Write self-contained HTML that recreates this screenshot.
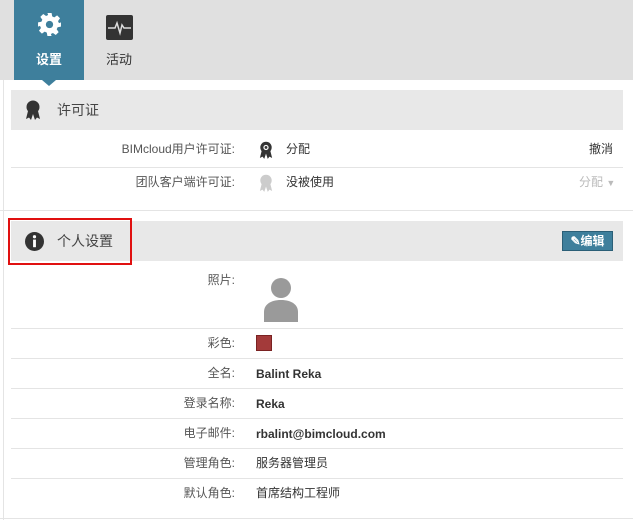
<!DOCTYPE html>
<html><head><meta charset="utf-8"><style>
*{margin:0;padding:0;box-sizing:border-box}
body{width:633px;height:526px;background:#fff;font-family:"Liberation Sans","Noto Sans CJK SC",sans-serif;font-size:12px;line-height:16px;color:#333;position:relative;overflow:hidden}
.abs{position:absolute}
.top{left:0;top:0;width:633px;height:80px;background:#e0e0e0}
.tab{top:0;height:80px;text-align:center;font-size:13px}
.hdr{left:11px;width:612px;height:40px;background:#e8e8e8;font-size:14px;color:#444}
.line{height:1px;background:#e4e4e4}
.lbl{width:235px;text-align:right;color:#555}
.val{left:256px;color:#333}
b{font-weight:bold;color:#333}
</style></head><body>
<div class="abs top"></div>
<div class="abs tab" style="left:14px;width:70px;background:#3e7f9c;color:#fff;font-weight:bold">
<svg class="abs" style="left:23px;top:12px" width="25" height="25" viewBox="0 0 24 24"><path fill="#fff" d="M10 1h4l.6 3.2 2 .9 2.7-1.9 2.8 2.8-1.9 2.7.9 2L23 10v4l-3.2.6-.9 2 1.9 2.7-2.8 2.8-2.7-1.9-2 .9L14 23h-4l-.6-3.2-2-.9-2.7 1.9-2.8-2.8 1.9-2.7-.9-2L1 14v-4l3.2-.6.9-2L3.2 4.7 6 1.9l2.7 1.9 2-.9z"/><circle cx="12" cy="12" r="3.5" fill="#3e7f9c"/></svg>
<div class="abs" style="left:0;width:70px;top:52px">设置</div></div>
<div class="abs" style="left:42px;top:80px;border-left:7px solid transparent;border-right:7px solid transparent;border-top:6px solid #3e7f9c"></div>
<div class="abs tab" style="left:84px;width:70px;color:#333">
<svg class="abs" style="left:22px;top:15px" width="27" height="25" viewBox="0 0 27 25"><rect width="27" height="25" rx="2" fill="#333"/><path d="M2 13h7l2-5 3 10 2-8 2 3h7" stroke="#ddd" stroke-width="1.5" fill="none"/></svg>
<div class="abs" style="left:0;width:70px;top:52px">活动</div></div>
<div class="abs" style="left:3px;top:80px;width:1px;height:440px;background:#e4e4e4"></div>

<div class="abs hdr" style="top:90px">
<svg class="abs" style="left:14px;top:10px" width="16" height="21" viewBox="0 0 16 21"><circle cx="8" cy="7" r="6.5" fill="#333"/><path d="M3 11l-2 8 3-1.5 2 2.5 2-6 2 6 2-2.5 3 1.5-2-8z" fill="#333"/></svg>
<div class="abs" style="left:46px;top:12px">许可证</div></div>
<div class="abs lbl" style="top:141px">BIMcloud用户许可证:</div>
<svg class="abs" style="left:259px;top:141px" width="14" height="19" viewBox="0 0 16 21"><circle cx="8" cy="7" r="6.5" fill="#333"/><circle cx="8" cy="7" r="3" fill="#fff"/><circle cx="8" cy="7" r="1.6" fill="#333"/><path d="M3 11l-2 8 3-1.5 2 2.5 2-6 2 6 2-2.5 3 1.5-2-8z" fill="#333"/></svg>
<div class="abs" style="left:286px;top:141px">分配</div>
<div class="abs" style="left:589px;top:141px">撤消</div>
<div class="abs line" style="left:11px;top:167px;width:612px"></div>
<div class="abs lbl" style="top:174px">团队客户端许可证:</div>
<svg class="abs" style="left:259px;top:174px" width="14" height="19" viewBox="0 0 16 21"><circle cx="8" cy="7" r="6.5" fill="#ccc"/><path d="M3 11l-2 8 3-1.5 2 2.5 2-6 2 6 2-2.5 3 1.5-2-8z" fill="#ccc"/></svg>
<div class="abs" style="left:286px;top:174px">没被使用</div>
<div class="abs" style="left:579px;top:174px;color:#bbb">分配 <span style="font-size:9px">▼</span></div>
<div class="abs line" style="left:0;top:210px;width:633px"></div>

<div class="abs hdr" style="top:221px">
<svg class="abs" style="left:14px;top:11px" width="19" height="19" viewBox="0 0 20 20"><circle cx="10" cy="10" r="10" fill="#333"/><circle cx="10" cy="5" r="1.7" fill="#fff"/><rect x="8.5" y="8" width="3" height="8" fill="#fff"/></svg>
<div class="abs" style="left:46px;top:12px">个人设置</div>
<div class="abs" style="left:551px;top:10px;width:51px;height:20px;background:#3e7f9c;border:1px solid #2b5f77;color:#fff;font-weight:bold;font-size:12px;line-height:18px;text-align:center">✎编辑</div></div>
<div class="abs" style="left:8px;top:218px;width:124px;height:47px;border:2px solid #e01010"></div>

<div class="abs lbl" style="top:272px">照片:</div>
<svg class="abs" style="left:262px;top:272px" width="38" height="50" viewBox="0 0 38 50"><circle cx="19" cy="16" r="10" fill="#9a9a9a"/><path d="M2 50v-10c0-7 6-12 17-12s17 5 17 12v10z" fill="#9a9a9a"/></svg>
<div class="abs line" style="left:11px;top:328px;width:612px"></div>
<div class="abs lbl" style="top:335px">彩色:</div>
<div class="abs" style="left:256px;top:335px;width:16px;height:16px;background:#a33a3a;border:1px solid #7a2222"></div>
<div class="abs line" style="left:11px;top:358px;width:612px"></div>
<div class="abs lbl" style="top:365px">全名:</div><div class="abs val" style="top:366px"><b>Balint Reka</b></div>
<div class="abs line" style="left:11px;top:388px;width:612px"></div>
<div class="abs lbl" style="top:395px">登录名称:</div><div class="abs val" style="top:396px"><b>Reka</b></div>
<div class="abs line" style="left:11px;top:418px;width:612px"></div>
<div class="abs lbl" style="top:425px">电子邮件:</div><div class="abs val" style="top:426px"><b>rbalint@bimcloud.com</b></div>
<div class="abs line" style="left:11px;top:448px;width:612px"></div>
<div class="abs lbl" style="top:455px">管理角色:</div><div class="abs val" style="top:455px">服务器管理员</div>
<div class="abs line" style="left:11px;top:478px;width:612px"></div>
<div class="abs lbl" style="top:485px">默认角色:</div><div class="abs val" style="top:485px">首席结构工程师</div>
<div class="abs line" style="left:0;top:518px;width:633px"></div>
</body></html>
